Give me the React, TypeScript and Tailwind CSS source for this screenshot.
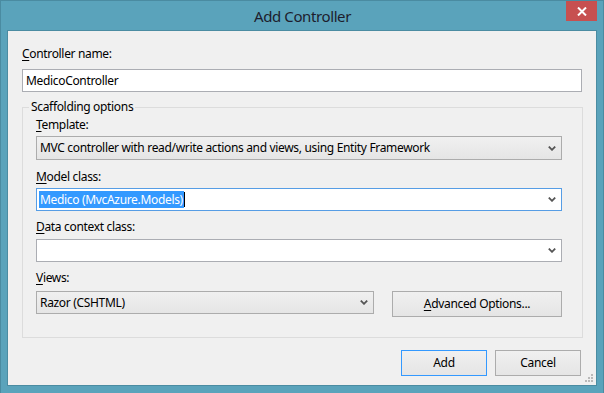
import React from "react";

const font = { fontFamily: '"Noto Sans", "Open Sans", sans-serif' };

function Chevron() {
  return (
    <svg width="8" height="5" viewBox="0 0 8 5" className="shrink-0">
      <path d="M0.8 0.6 L4 3.8 L7.2 0.6" fill="none" stroke="#555" strokeWidth="1.8" />
    </svg>
  );
}

function Label({ u, rest }: { u: string; rest: string }) {
  return (
    <div className="h-[16px] leading-[16px] text-[12px] text-black">
      <span className="underline underline-offset-[2px] decoration-[1px]">{u}</span>
      {rest}
    </div>
  );
}

export default function App() {
  return (
    <div
      className="w-[604px] h-[393px] bg-[#5aa3bb] border-t border-l border-r border-[#4a8ba1] flex flex-col relative overflow-hidden tracking-[-0.33px]"
      style={font}
    >
      {/* title bar */}
      <div className="h-[29px] flex items-center justify-center text-[15px] text-[#1d1d2d] pl-[1px] tracking-[-0.4px]">
        <span className="mt-[1px]">Add Controller</span>
      </div>
      <div className="absolute top-0 right-[6px] w-[31px] h-[20px] bg-[#c75050] flex items-center justify-center">
        <svg width="10" height="9" viewBox="0 0 10 9">
          <path d="M1 0.5 L9 8.5 M9 0.5 L1 8.5" stroke="#fff" strokeWidth="2" />
        </svg>
      </div>

      {/* client */}
      <div className="ml-[6px] mr-[6px] w-[590px] h-[356px] border border-[#4b8ca2] bg-[#f0f0f0] relative px-[14px] text-[12px] text-black">
        <div className="mt-[15px]">
          <Label u="C" rest="ontroller name:" />
        </div>
        <div className="mt-[7px] h-[23px] w-[560px] border border-[#abadb3] bg-white flex items-center pl-[3px] text-[12px]">
          MedicoController
        </div>

        <fieldset className="mt-[7px] w-[561px] border border-[#dcdcdc] pl-[13px] pr-[19px] pb-[20px] pt-[2px]">
          <legend className="-ml-[7px] px-[2px] h-[16px] leading-[16px] text-[12px]">Scaffolding options</legend>
          <Label u="T" rest="emplate:" />
          <div className="mt-[3px] h-[24px] w-[526px] border border-[#acacac] bg-gradient-to-b from-[#f0f0f0] to-[#e5e5e5] flex items-center justify-between pl-[3px] pr-[5px]">
            <span>MVC controller with read/write actions and views, using Entity Framework</span>
            <Chevron />
          </div>

          <div className="mt-[9px]">
            <Label u="M" rest="odel class:" />
          </div>
          <div className="mt-[3px] h-[23px] w-[526px] border border-[#569de5] bg-white flex items-center justify-between pl-[2px] pr-[5px]">
            <span className="flex items-center">
              <span className="bg-[#3399ff] text-white h-[17px] leading-[17px] px-[1px]">Medico (MvcAzure.Models)</span>
              <span className="w-[1px] h-[15px] bg-black" />
            </span>
            <Chevron />
          </div>

          <div className="mt-[8px]">
            <Label u="D" rest="ata context class:" />
          </div>
          <div className="mt-[4px] h-[23px] w-[526px] border border-[#abadb3] bg-white flex items-center justify-end pr-[5px]">
            <Chevron />
          </div>

          <div className="mt-[8px]">
            <Label u="V" rest="iews:" />
          </div>
          <div className="mt-[5px] flex items-start gap-[18px]">
            <div className="h-[23px] w-[338px] border border-[#acacac] bg-gradient-to-b from-[#f0f0f0] to-[#e5e5e5] flex items-center justify-between pl-[3px] pr-[5px]">
              <span>Razor (CSHTML)</span>
              <Chevron />
            </div>
            <div className="h-[26px] w-[170px] border border-[#acacac] bg-gradient-to-b from-[#f0f0f0] to-[#e5e5e5] flex items-center justify-center">
              <span>
                <span className="underline underline-offset-[2px]">A</span>dvanced Options...
              </span>
            </div>
          </div>
        </fieldset>

        <div className="mt-[12px] flex justify-end gap-[8px] pr-[1px]">
          <div className="h-[26px] w-[86px] border border-[#3399ff] bg-gradient-to-b from-[#f0f0f0] to-[#e5e5e5] flex items-center justify-center">
            Add
          </div>
          <div className="h-[26px] w-[86px] border border-[#acacac] bg-gradient-to-b from-[#f0f0f0] to-[#e5e5e5] flex items-center justify-center">
            Cancel
          </div>
        </div>

        <svg className="absolute right-[1px] bottom-[1px]" width="10" height="10" viewBox="0 0 10 10">
          <rect x="6" y="0" width="2" height="2" fill="#b9b9b9" />
          <rect x="3" y="3" width="2" height="2" fill="#b9b9b9" />
          <rect x="6" y="3" width="2" height="2" fill="#b9b9b9" />
          <rect x="0" y="6" width="2" height="2" fill="#b9b9b9" />
          <rect x="3" y="6" width="2" height="2" fill="#b9b9b9" />
          <rect x="6" y="6" width="2" height="2" fill="#b9b9b9" />
        </svg>
      </div>
    </div>
  );
}
